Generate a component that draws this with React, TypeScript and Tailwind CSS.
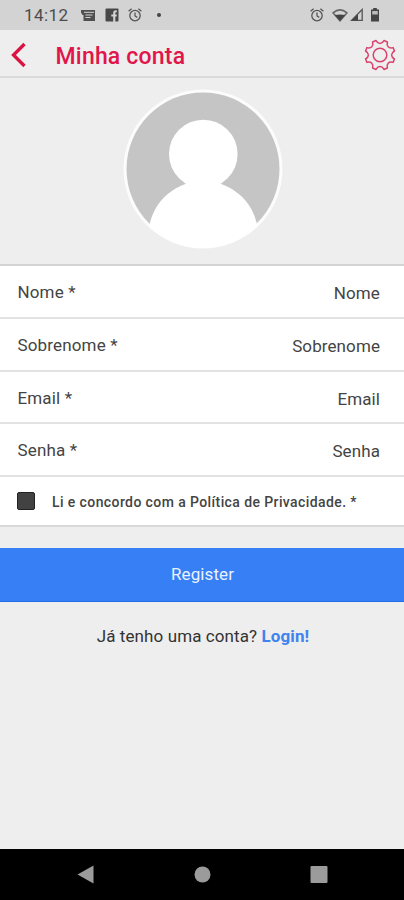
import React from "react";

function polar(radius: number, degrees: number) {
  const a = (degrees * Math.PI) / 180;
  return `${(16 + radius * Math.cos(a)).toFixed(2)} ${(16 + radius * Math.sin(a)).toFixed(2)}`;
}

function gearPath() {
  let d = "";
  for (let i = 0; i < 8; i++) {
    const c = 22.5 + i * 45;
    d += `${i === 0 ? "M" : "L"}${polar(15, c - 7)} L${polar(15, c + 7)} `;
    d += `C${polar(10.8, c + 13)} ${polar(10.8, c + 32)} ${polar(15, c + 38)} `;
  }
  return d + "Z";
}

function Gear() {
  return (
    <svg className="h-8 w-8" viewBox="0 0 32 32" fill="none" stroke="#d9416c" strokeWidth="1.5" strokeLinejoin="round">
      <path d={gearPath()} />
      <circle cx="16" cy="16" r="6.8" />
    </svg>
  );
}

function Alarm() {
  return (
    <svg className="h-[14px] w-[14px]" viewBox="0 0 14 14" fill="none" stroke="#555" strokeWidth="1.3">
      <circle cx="7" cy="7.6" r="5.2" />
      <path d="M7 4.5V8l2.3 1.4M.6 3.2 3.6.8M13.4 3.2 10.4.8" />
    </svg>
  );
}

function StatusBar() {
  return (
    <div className="flex h-[30px] items-center bg-[#d3d3d3] pl-[24px] pr-[24px]">
      <span className="w-[57px] pt-px text-[17px] leading-[29px] tracking-[0.4px] text-[#4c4c4c]">14:12</span>
      <svg className="h-[13px] w-[14px]" viewBox="0 0 14 13">
        <path d="M0 1h14v3H3v2H1.5L0 3.5zM2.5 4H14v8H2.5z" fill="#505050" />
        <path d="M3 3.3h10M4.5 6h7M4.5 8.5h5" stroke="#d3d3d3" strokeWidth="1" />
      </svg>
      <svg className="ml-[10px] h-[14px] w-[14px]" viewBox="0 0 14 14">
        <rect x=".5" y=".5" width="13" height="13" rx="1" fill="#484848" />
        <path d="M8.2 14V8.5H6.3V6.4h1.9V5c0-2 1.1-2.9 3.6-2.6v1.9c-1.2 0-1.5.1-1.5 1.1v1h1.5l-.2 2.1h-1.3V14z" fill="#d3d3d3" />
      </svg>
      <span className="ml-[9px]"><Alarm /></span>
      <span className="ml-[15px] h-[4px] w-[4px] rounded-full bg-[#444]" />
      <span className="ml-auto mr-[8px]"><Alarm /></span>
      <svg className="h-[14px] w-[16px]" viewBox="0 0 16 14">
        <path d="M1 4.8Q8-1 15 4.8L8 12.800z" fill="none" stroke="#666" strokeWidth="1.5" />
        <path d="M2.800 7Q8 5.800 13.200 7L8 13z" fill="#444" />
      </svg>
      <svg className="ml-[2px] h-[14px] w-[14px]" viewBox="0 0 14 14">
        <path d="M1.5 12.4 12.2 1.5v10.9z" fill="none" stroke="#555" strokeWidth="1.3" />
        <path d="M1.5 12.4 8 6v6.4z" fill="#444" />
      </svg>
      <svg className="ml-[6px] h-[14px] w-[10px]" viewBox="0 0 10 14">
        <path d="M3.2 0h3.6v1.5H9V13.5H1V1.5h2.2z" fill="#444" />
        <path d="M2.2 3h5.6v3.500H2.200z" fill="#bbb" />
      </svg>
    </div>
  );
}

function Avatar() {
  return (
    <svg className="h-[160px] w-[160px]" viewBox="0 0 160 160">
      <defs>
        <clipPath id="disc"><circle cx="80" cy="80" r="79" /></clipPath>
      </defs>
      <circle cx="80" cy="80" r="79.5" fill="#fcfcfc" />
      <circle cx="80" cy="80" r="76.5" fill="#c5c5c5" />
      <g clipPath="url(#disc)" fill="#fff">
        <circle cx="80.3" cy="65" r="34.3" />
        <circle cx="80.3" cy="147" r="55" />
      </g>
    </svg>
  );
}

const fields = [
  { label: "Nome", height: "h-[53px]" },
  { label: "Sobrenome", height: "h-[53px]" },
  { label: "Email", height: "h-[52px]" },
  { label: "Senha", height: "h-[53px]" },
];

export default function App() {
  return (
    <div className="flex h-[900px] w-[404px] flex-col overflow-hidden bg-[#eeeeee] font-['Roboto',sans-serif] text-[#444]">
      <StatusBar />
      <header className="flex h-[48px] items-center border-b-2 border-[#dadada] pl-[10px] pr-[8px]">
        <svg className="mt-[4px] h-[26px] w-[18px]" viewBox="0 0 18 26">
          <path d="M14.500 2 3.500 13l11 11" fill="none" stroke="#db1340" strokeWidth="3.3" />
        </svg>
        <h1 className="ml-[27.500px] mt-[7px] text-[23px] leading-7 font-medium tracking-[0.2px] text-[#e0154a]">Minha conta</h1>
        <span className="ml-auto mt-[4px]"><Gear /></span>
      </header>
      <section className="flex h-[188px] justify-center border-b-2 border-[#d4d4d4] pt-[11px] pl-[2.500px]">
        <Avatar />
      </section>
      <form className="bg-white">
        {fields.map((f) => (
          <label key={f.label} className={`flex items-center justify-between border-b-2 border-[#e2e2e2] pl-[17.500px] pr-[24px] pt-[3px] text-[17px] ${f.height}`}>
            <span className="tracking-[0.15px]">{f.label} *</span>
            <span className="pt-[2px] tracking-[0.1px]">{f.label}</span>
          </label>
        ))}
        <label className="flex h-[50px] items-center border-b-2 border-[#d9d9d9] pl-[17px]">
          <span className="h-[18px] w-[18px] rounded-[2px] border border-[#222] bg-[#424242]" />
          <span className="ml-[17px] pt-[2px] text-[14px] font-medium tracking-[0.4px]">Li e concordo com a Política de Privacidade. *</span>
        </label>
      </form>
      <button className="mt-[21px] h-[54px] shrink-0 border-b border-[#1f6de6] bg-[#367ff5] pl-px text-[17px] tracking-[0.1px] text-[#eaf2ff]">Register</button>
      <p className="mt-[22px] pl-[2px] text-center text-[17px] leading-6 tracking-[0.1px] text-[#333]">
        Já tenho uma conta? <b className="font-bold text-[#3f83ee]">Login!</b>
      </p>
      <nav className="mt-auto h-[51px] bg-black pt-[16px]">
        <svg className="h-[20px] w-[404px]" viewBox="0 0 404 20" fill="#9b9b9b">
          <path d="M77.500 9.500 93.500.5v18z" />
          <circle cx="202.500" cy="9.500" r="8" />
          <rect x="310.500" y="1" width="17" height="17" rx="1" />
        </svg>
      </nav>
    </div>
  );
}
